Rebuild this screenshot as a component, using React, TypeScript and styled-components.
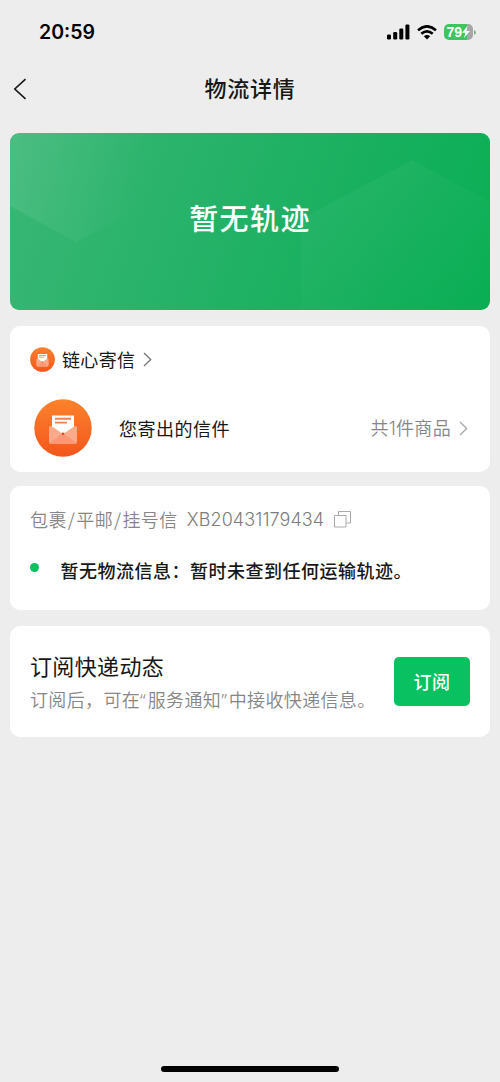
import React from "react";
import styled, { createGlobalStyle } from "styled-components";

const GlobalStyle = createGlobalStyle`
  * { box-sizing: border-box; }
  html, body { margin: 0; background: #ededed; }
  body { font-family: "Noto Sans CJK SC", "Noto Sans", sans-serif; color: #171717; }
`;

const Screen = styled.main`
  width: 500px;
  height: 1082px;
  display: flex;
  flex-direction: column;
  background: #ededed;
  overflow: hidden;
`;

const StatusBar = styled.header`
  height: 62px;
  padding: 2px 24px 0 39px;
  display: flex;
  align-items: center;
  justify-content: space-between;
  flex: none;
`;

const Time = styled.span`
  font: 600 19.5px/24px Inter, sans-serif;
  letter-spacing: 0;
  color: #000;
`;

const StatusIcons = styled.div`
  display: flex;
  align-items: center;
  gap: 7px;
`;

const Battery = styled.div`
  display: flex;
  align-items: center;
  gap: 1px;
`;

const BatteryBody = styled.div`
  width: 29.5px;
  height: 16.5px;
  padding-left: 3px;
  border-radius: 5px;
  display: flex;
  align-items: center;
  background: linear-gradient(90deg, #3fc45f 79%, #a6a6a6 79%);
  color: #fff;
  font: 700 14px/16px "Liberation Sans", sans-serif;
`;

const NavBar = styled.nav`
  height: 70px;
  flex: none;
  display: grid;
  grid-template-columns: 100px 1fr 100px;
  align-items: center;
  padding-bottom: 17px;
`;

const BackButton = styled.button`
  width: 40px;
  height: 40px;
  padding: 0 0 0 13px;
  border: 0;
  background: none;
  display: flex;
  align-items: center;
`;

const Title = styled.h1`
  margin: 0;
  padding-bottom: 3px;
  text-align: center;
  font-size: 22px;
  line-height: 30px;
  font-weight: 500;
  letter-spacing: 0.8px;
`;

const Content = styled.div`
  padding: 0.5px 10px 0;
  display: flex;
  flex-direction: column;
`;

const Banner = styled.section`
  height: 177.5px;
  border-radius: 9px;
  overflow: hidden;
  display: grid;
  place-items: center;
  background: linear-gradient(110deg, #3ab775 0%, #25b268 42%, #09ae54 100%);
  > * { grid-area: 1 / 1; }
`;

const BannerText = styled.h2`
  margin: 0;
  padding-bottom: 9px;
  z-index: 1;
  color: #fff;
  font-size: 29px;
  line-height: 40px;
  font-weight: 500;
  letter-spacing: 1.4px;
`;

const Card = styled.section<{ $height: number; $gap: number }>`
  height: ${(p) => p.$height}px;
  margin-top: ${(p) => p.$gap}px;
  padding: 0 20px;
  border-radius: 10px;
  background: #fff;
`;

const Row = styled.div<{ $height: number; $top?: number }>`
  height: ${(p) => p.$height}px;
  margin-top: ${(p) => p.$top ?? 0}px;
  display: flex;
  align-items: center;
`;

const Label = styled.span<{ $muted?: boolean; $weight?: number; $spacing?: number; $left?: number; $lift?: number }>`
  font-size: 18px;
  line-height: 26px;
  white-space: nowrap;
  color: ${(p) => (p.$muted ? "#868686" : "#171717")};
  font-weight: ${(p) => p.$weight ?? 400};
  letter-spacing: ${(p) => p.$spacing ?? 0.35}px;
  margin-left: ${(p) => p.$left ?? 0}px;
  padding-bottom: ${(p) => p.$lift ?? 0}px;
`;

const Latin = styled.span`
  font-family: Inter, sans-serif;
  font-weight: 300;
  letter-spacing: 0;
`;

const Slash = styled.span`
  margin: 0 0.9px;
`;

const Quote = styled.span`
  font-family: "Noto Sans", sans-serif;
  letter-spacing: 2px;
`;

const TrackingNumber = styled.span`
  margin-left: 9px;
  padding-top: 1px;
  font: 300 18px/26px Inter, sans-serif;
  letter-spacing: 0.08px;
  color: #7c7c7c;
`;

const Trailing = styled.div`
  margin-left: auto;
  margin-right: 2px;
  display: flex;
  align-items: center;
  gap: 8px;
`;

const ShopArrow = styled.span`
  display: flex;
  margin-left: 8px;
`;

const BadgeSlot = styled.div`
  display: flex;
  margin-left: 4px;
`;

const CopyIcon = styled.svg`
  margin-left: 10px;
`;

const Dot = styled.i`
  width: 9px;
  height: 9px;
  margin: -6px 21.5px 0 0;
  border-radius: 50%;
  background: #0ac160;
`;

const SubscribeCard = styled(Card)`
  display: flex;
  justify-content: space-between;
  align-items: center;
`;

const SubscribeCopy = styled.div`
  display: flex;
  flex-direction: column;
  min-width: 0;
  padding-bottom: 1px;
`;

const SubscribeTitle = styled.h3`
  margin: 0;
  padding-bottom: 5px;
  font-size: 22px;
  line-height: 32px;
  font-weight: 400;
  letter-spacing: 0.35px;
`;

const SubscribeButton = styled.button`
  width: 76px;
  height: 49px;
  padding: 0;
  border: 0;
  border-radius: 5px;
  background: #09c160;
  color: #fff;
  font: 500 18px/26px "Noto Sans CJK SC", sans-serif;
  letter-spacing: 0.4px;
  flex: none;
`;

const HomeIndicator = styled.div`
  width: 178px;
  height: 6px;
  margin: auto auto 10.5px;
  border-radius: 3px;
  background: #000;
`;

const Chevron = ({ color }: { color: string }) => (
  <svg width="9" height="15" viewBox="0 0 9 15" fill="none" stroke={color} strokeWidth="1.3">
    <path d="M1 1l6.7 6.5L1 14" />
  </svg>
);

const LetterBadge = ({ id, size }: { id: string; size: number }) => (
  <svg width={size} height={size} viewBox="0 0 58 58">
    <defs>
      <linearGradient id={id} x1="0" y1="0" x2="0" y2="1">
        <stop offset="0" stopColor="#fb822c" />
        <stop offset="1" stopColor="#f4561d" />
      </linearGradient>
    </defs>
    <circle cx="29" cy="29" r="28.7" fill={`url(#${id})`} />
    <path d="M15 30.5q0-4 3-3h22q3-1 3 3V42q0 3-3 3H18q-3 0-3-3z" fill="#f98256" />
    <path d="M18 16.500h22v13L29 35.5 18 29.5z" fill="#fff" />
    <path d="M21 19.8h16M21 23.6h12" stroke="#f58052" strokeWidth="1.9" />
    <path d="M15 29q0-3 3-1.5L29 35l11-7.5q3-1.5 3 1.5v13q0 3-3 3H18q-3 0-3-3z" fill="#fbaa8b" />
    <path d="M15.6 44L29 34l13.4 10q-1 1-2.4 1H18q-1.4 0-2.4-1z" fill="#fc9974" />
    <circle cx="29" cy="34.7" r="1.3" fill="#e74423" />
  </svg>
);

const BannerPattern = () => (
  <svg width="480" height="178" viewBox="0 0 480 178">
    <defs>
      <linearGradient id="leftFacet" gradientUnits="userSpaceOnUse" x1="0" y1="20" x2="135" y2="45">
        <stop offset="0" stopColor="#fff" stopOpacity="0.09" />
        <stop offset="1" stopColor="#fff" stopOpacity="0" />
      </linearGradient>
      <linearGradient id="rightFacet" x1="0.2" y1="0" x2="0.8" y2="1">
        <stop offset="0" stopColor="#fff" stopOpacity="0.045" />
        <stop offset="1" stopColor="#fff" stopOpacity="0" />
      </linearGradient>
    </defs>
    <path d="M0 0H145V68L66 109 0 73z" fill="url(#leftFacet)" />
    <path d="M291 178V86L402 27l78 42v109z" fill="url(#rightFacet)" />
  </svg>
);

export default function App() {
  return (
    <Screen>
      <GlobalStyle />
      <StatusBar>
        <Time>20:59</Time>
        <StatusIcons>
          <svg width="23" height="16" viewBox="0 0 23 16">
            <rect x="0" y="10.5" width="4" height="5" rx="1.2" />
            <rect x="6.2" y="8" width="4" height="7.5" rx="1.2" />
            <rect x="12.3" y="4.5" width="4" height="11" rx="1.2" />
            <rect x="18.4" y="0.5" width="4" height="15" rx="1.2" />
          </svg>
          <svg width="20" height="15" viewBox="0 0 20 15" fill="none" stroke="#000" strokeWidth="2.6">
            <path d="M1 5.3Q10-2.7 19 5.3M4.3 8.8Q10 3.9 15.7 8.8" />
            <path d="M10 14.5L6.8 11.3Q10 8.7 13.2 11.3z" fill="#000" stroke="none" />
          </svg>
          <Battery>
            <BatteryBody>
              79
              <svg width="8" height="12" viewBox="0 0 8 12" fill="#fff">
                <path d="M5.5 0L0 6.7h3.3L2 12l6-7H4.6z" />
              </svg>
            </BatteryBody>
            <svg width="2" height="5" viewBox="0 0 2 5"><path d="M0 0q2 .8 2 2.5T0 5z" fill="#72b985" /></svg>
          </Battery>
        </StatusIcons>
      </StatusBar>

      <NavBar>
        <BackButton aria-label="返回">
          <svg width="14" height="22" viewBox="0 0 14 22" fill="none" stroke="#171717" strokeWidth="1.6">
            <path d="M12.5 1.2L1.8 11l10.7 9.8" />
          </svg>
        </BackButton>
        <Title>物流详情</Title>
      </NavBar>

      <Content>
        <Banner>
          <BannerPattern />
          <BannerText>暂无轨迹</BannerText>
        </Banner>

        <Card $height={146.5} $gap={15.5}>
          <Row $height={26} $top={21}>
            <LetterBadge id="badgeSmall" size={25} />
            <Label $left={7} $lift={1}>链心寄信</Label>
            <ShopArrow>
              <Chevron color="#777" />
            </ShopArrow>
          </Row>
          <Row $height={58} $top={26.5}>
            <BadgeSlot>
              <LetterBadge id="badgeLarge" size={58} />
            </BadgeSlot>
            <Label $left={27} $spacing={0.5}>您寄出的信件</Label>
            <Trailing>
              <Label $muted $weight={350}>共<Latin>1</Latin>件商品</Label>
              <Chevron color="#aaa" />
            </Trailing>
          </Row>
        </Card>

        <Card $height={124} $gap={14}>
          <Row $height={26} $top={20}>
            <Label $muted $weight={350} $spacing={0.45} $lift={1}>
              包裹<Slash>/</Slash>平邮<Slash>/</Slash>挂号信
            </Label>
            <TrackingNumber>XB20431179434</TrackingNumber>
            <CopyIcon width="17" height="17" viewBox="0 0 17 17" fill="none" stroke="#aaa">
              <path d="M.5 4.5h11.500v11.500H.5zM4.500 4.500V.5h12V12H12" />
            </CopyIcon>
          </Row>
          <Row $height={26} $top={25}>
            <Dot />
            <Label $weight={500} $spacing={0.5} $lift={1}>暂无物流信息：暂时未查到任何运输轨迹。</Label>
          </Row>
        </Card>

        <SubscribeCard $height={111.5} $gap={15.5}>
          <SubscribeCopy>
            <SubscribeTitle>订阅快递动态</SubscribeTitle>
            <Label $muted $weight={350}>
              订阅后，可在<Quote>“</Quote>服务通知<Quote>”</Quote>中接收快递信息。
            </Label>
          </SubscribeCopy>
          <SubscribeButton>订阅</SubscribeButton>
        </SubscribeCard>
      </Content>

      <HomeIndicator />
    </Screen>
  );
}
